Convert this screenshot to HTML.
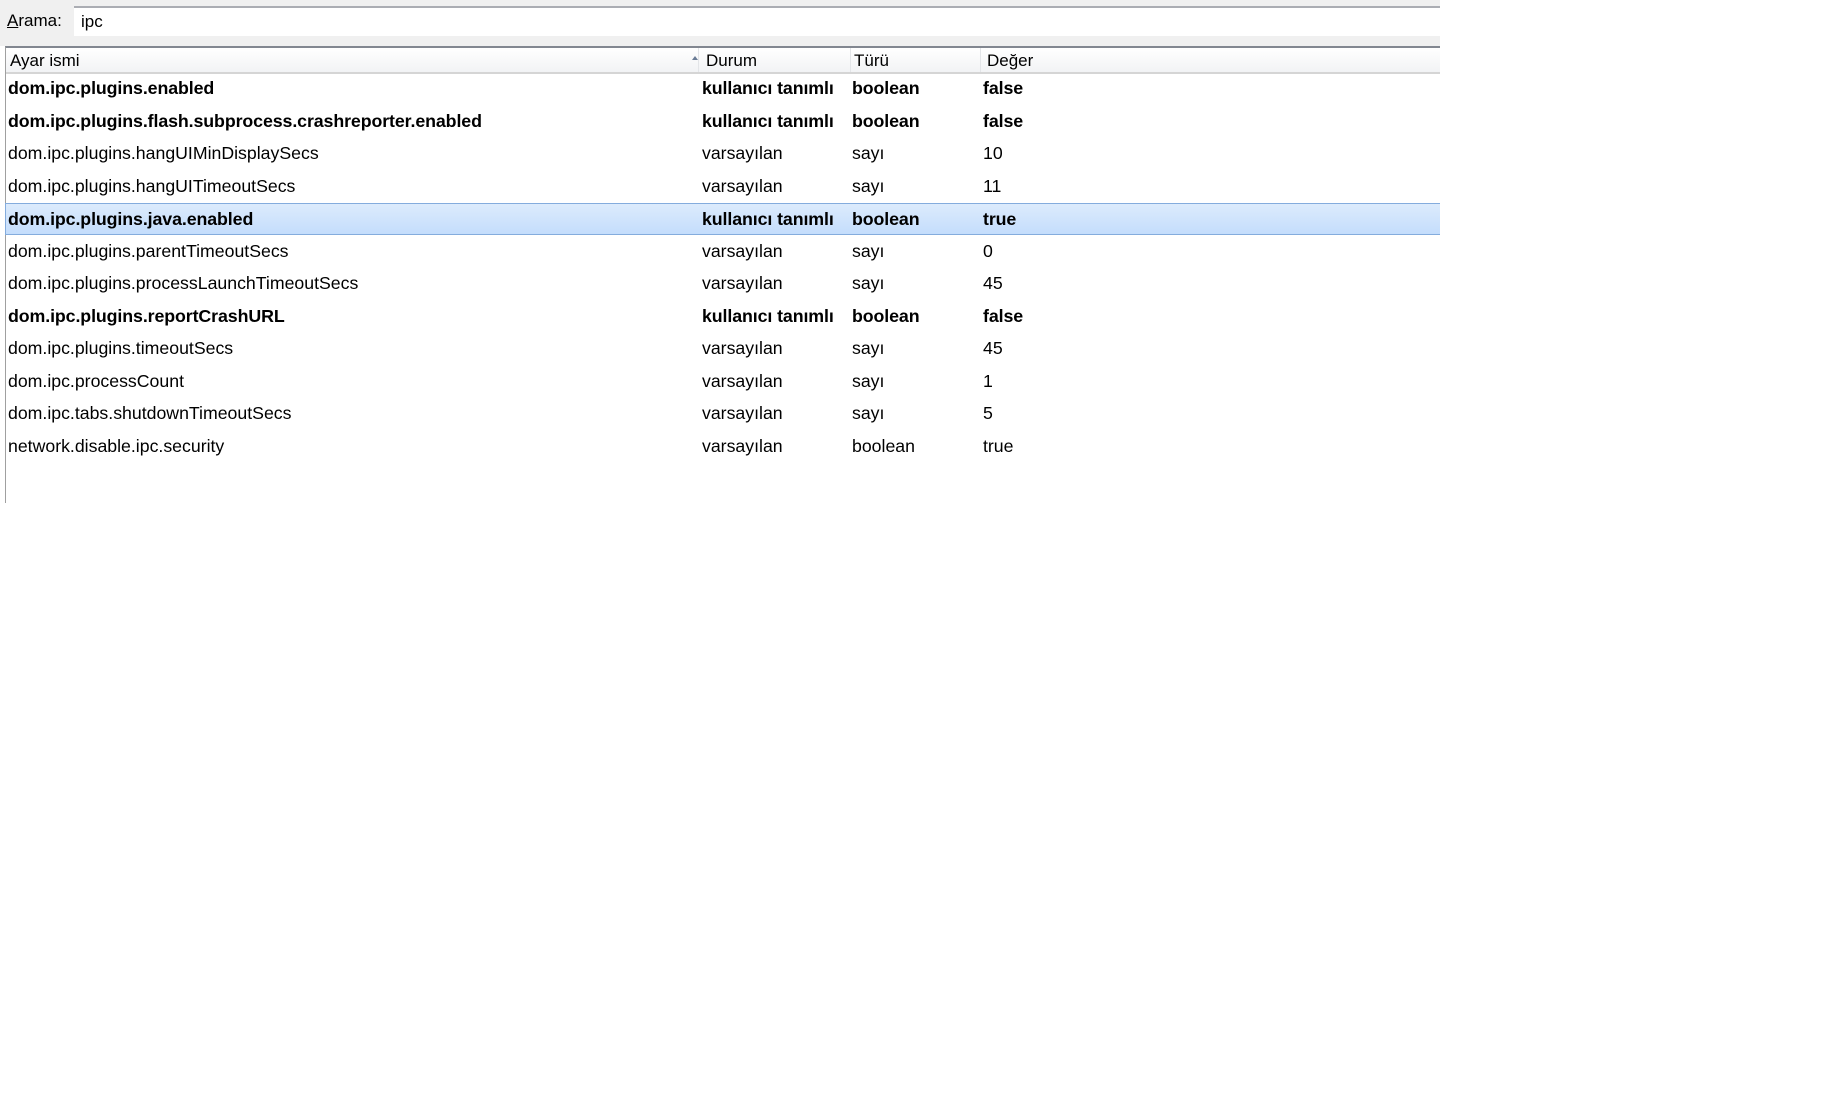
<!DOCTYPE html>
<html><head><meta charset="utf-8"><style>
body{margin:0;width:1825px;height:1101px;background:#fff;font-family:"Liberation Sans",sans-serif;color:#000;position:relative;overflow:hidden}
.top{position:absolute;left:0;top:0;width:1440px;height:46px;background:#f0f0f0}
.lbl{position:absolute;left:7px;top:11px;font-size:17px}
.inp{position:absolute;left:74px;top:6px;width:1366px;height:30px;background:#fff;border-top:2px solid #abadb3;box-sizing:border-box;font-size:17px;padding:4px 0 0 7px}
.tbl{position:absolute;left:5px;top:46px;width:1435px;height:457px;border-left:1px solid #a0a0a0;border-top:2px solid #828790;box-sizing:border-box}
.hdr{position:absolute;left:0;top:0;width:100%;height:24px;background:linear-gradient(#fff,#f2f3f5);border-bottom:2px solid #d5d5d5;font-size:17px}
.hdr span{position:absolute;top:3px}
.sep{position:absolute;top:0;width:1px;height:24px;background:#e3e5e8}
.row{position:absolute;left:0;width:100%;height:33px;font-size:17.7px}
.row span{position:absolute;top:6px;white-space:nowrap}
.b{font-weight:bold;font-size:17.8px;letter-spacing:-0.1px}
.b span{top:6px}
.sel{background:linear-gradient(#dcebfc,#c4ddfc);border-top:1px solid #84acdd;border-bottom:1px solid #84acdd;box-sizing:border-box;border-left:1px solid #84acdd}
.tri{position:absolute;left:686px;top:8px;width:0;height:0;border-left:3px solid transparent;border-right:3px solid transparent;border-bottom:4px solid #6a7c96}
</style></head><body>
<div class="top"></div>
<div class="lbl"><u>A</u>rama:</div>
<div class="inp">ipc</div>
<div class="tbl">
<div class="hdr"><span style="left:4px">Ayar ismi</span><div class="tri"></div><div class="sep" style="left:692px"></div><span style="left:700px">Durum</span><div class="sep" style="left:844px"></div><span style="left:848px">Türü</span><div class="sep" style="left:974px"></div><span style="left:981px">Değer</span></div>
</div>
<div style="position:absolute;left:5px;top:72px;width:1435px">
<div class="row b" style="top:0"><span style="left:3px">dom.ipc.plugins.enabled</span><span style="left:697px">kullanıcı tanımlı</span><span style="left:847px">boolean</span><span style="left:978px">false</span></div>
<div class="row b" style="top:32.5px"><span style="left:3px">dom.ipc.plugins.flash.subprocess.crashreporter.enabled</span><span style="left:697px">kullanıcı tanımlı</span><span style="left:847px">boolean</span><span style="left:978px">false</span></div>
<div class="row" style="top:65px"><span style="left:3px">dom.ipc.plugins.hangUIMinDisplaySecs</span><span style="left:697px">varsayılan</span><span style="left:847px">sayı</span><span style="left:978px">10</span></div>
<div class="row" style="top:97.5px"><span style="left:3px">dom.ipc.plugins.hangUITimeoutSecs</span><span style="left:697px">varsayılan</span><span style="left:847px">sayı</span><span style="left:978px">11</span></div>
<div class="row b sel" style="top:131px;height:32px"><span style="left:2px;top:5px">dom.ipc.plugins.java.enabled</span><span style="left:696px;top:5px">kullanıcı tanımlı</span><span style="left:846px;top:5px">boolean</span><span style="left:977px;top:5px">true</span></div>
<div class="row" style="top:162.5px"><span style="left:3px">dom.ipc.plugins.parentTimeoutSecs</span><span style="left:697px">varsayılan</span><span style="left:847px">sayı</span><span style="left:978px">0</span></div>
<div class="row" style="top:195px"><span style="left:3px">dom.ipc.plugins.processLaunchTimeoutSecs</span><span style="left:697px">varsayılan</span><span style="left:847px">sayı</span><span style="left:978px">45</span></div>
<div class="row b" style="top:227.5px"><span style="left:3px">dom.ipc.plugins.reportCrashURL</span><span style="left:697px">kullanıcı tanımlı</span><span style="left:847px">boolean</span><span style="left:978px">false</span></div>
<div class="row" style="top:260px"><span style="left:3px">dom.ipc.plugins.timeoutSecs</span><span style="left:697px">varsayılan</span><span style="left:847px">sayı</span><span style="left:978px">45</span></div>
<div class="row" style="top:292.5px"><span style="left:3px">dom.ipc.processCount</span><span style="left:697px">varsayılan</span><span style="left:847px">sayı</span><span style="left:978px">1</span></div>
<div class="row" style="top:325px"><span style="left:3px">dom.ipc.tabs.shutdownTimeoutSecs</span><span style="left:697px">varsayılan</span><span style="left:847px">sayı</span><span style="left:978px">5</span></div>
<div class="row" style="top:357.5px"><span style="left:3px">network.disable.ipc.security</span><span style="left:697px">varsayılan</span><span style="left:847px">boolean</span><span style="left:978px">true</span></div>
</div>
</body></html>
